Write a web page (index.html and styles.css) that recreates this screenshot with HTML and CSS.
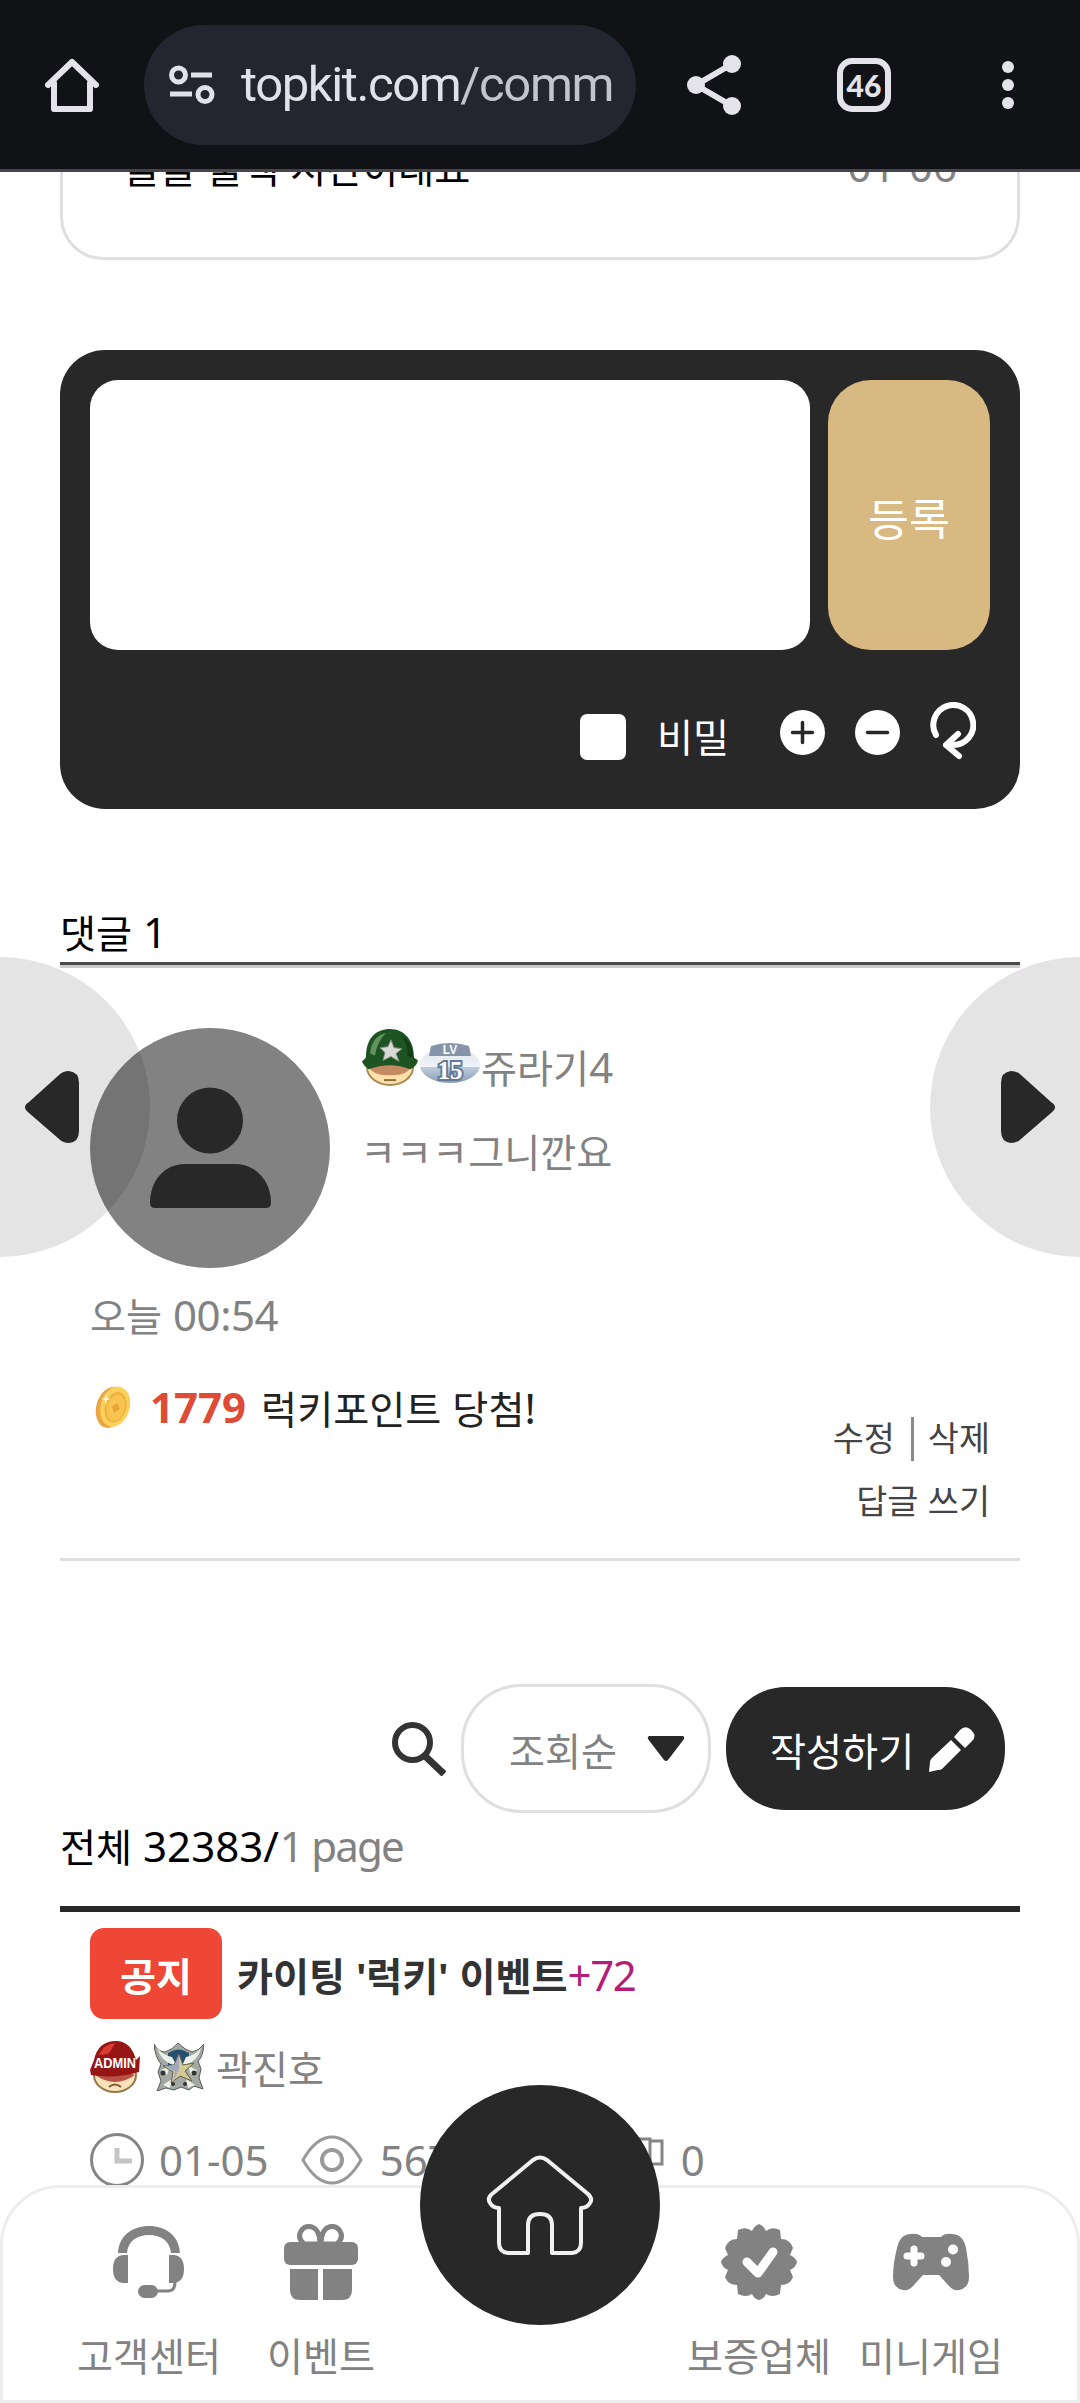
FILE: index.html
```html
<!DOCTYPE html>
<html lang="ko">
<head>
<meta charset="utf-8">
<meta name="viewport" content="width=device-width">
<title>topkit</title>
<link rel="stylesheet" href="styles.css">
</head>
<body>
<header class="browser">
  <svg class="browser-home" width="54" height="54" viewBox="0 0 54 54"><path d="M9 25v26h36V25M3 27 27 4l24 23" fill="none" stroke="#e3e3e9" stroke-width="6" stroke-linejoin="round" stroke-linecap="round"/></svg>
  <div class="url">
    <svg width="46" height="40" viewBox="0 0 46 40" fill="none" stroke="#e0e1e9" stroke-width="5"><circle cx="9.500" cy="10" r="7"/><path d="M22 10h21M1 29h22"/><circle cx="36" cy="29.500" r="7"/></svg>
    <span class="url-text">topkit.com<span class="url-path">/comm</span></span>
  </div>
  <svg class="share" width="54" height="60" viewBox="0 0 54 60" fill="#e3e3e9"><path d="M45 9 9 30l36 21" fill="none" stroke="#e3e3e9" stroke-width="6"/><circle cx="45" cy="9" r="9"/><circle cx="9" cy="30" r="9"/><circle cx="45" cy="51" r="9"/></svg>
  <div class="tabs">46</div>
  <svg class="more" width="12" height="48" viewBox="0 0 12 48" fill="#e3e3e9"><circle cx="6" cy="6" r="6"/><circle cx="6" cy="24" r="6"/><circle cx="6" cy="42" r="6"/></svg>
</header>

<main class="page">
  <section class="prev-card"><span>슬슬 출책 시간이래요</span><span class="num gray">01-06</span></section>

  <form class="editor">
    <div class="editor-main">
      <div class="field"></div>
      <div class="submit">등록</div>
    </div>
    <div class="editor-tools">
      <span class="check"></span>
      <span class="secret">비밀</span>
      <svg class="tool" width="45" height="45" viewBox="0 0 45 45"><circle cx="22.500" cy="22.500" r="22.500" fill="#fff"/><path d="M12.500 22.500h20M22.500 12.500v20" stroke="#282828" stroke-width="3.500" stroke-linecap="round"/></svg>
      <svg class="tool" width="45" height="45" viewBox="0 0 45 45"><circle cx="22.500" cy="22.500" r="22.500" fill="#fff"/><path d="M12.500 22.500h20" stroke="#282828" stroke-width="3.500" stroke-linecap="round"/></svg>
      <svg class="refresh" width="46" height="58" viewBox="0 0 46 58" fill="none" stroke="#fff" stroke-width="6" stroke-linecap="round" stroke-linejoin="round"><path d="M6 33A20 20 0 1 1 23 43L16 43M28 32 16 43 29 54"/></svg>
    </div>
  </form>

  <h2 class="count">댓글 <span class="num">1</span></h2>

  <article class="comment">
    <div class="comment-top">
      <svg class="avatar" width="240" height="240" viewBox="0 0 240 240"><circle cx="120" cy="120" r="120" fill="#828282"/><circle cx="120" cy="92.500" r="33" fill="#282828"/><path d="M60 175C60 152 75 136 95 136h50c20 0 36 16 36 39q0 5-5 5H65q-5 0-5-5Z" fill="#282828"/></svg>
      <div class="comment-body">
        <div class="author">
          <svg class="helmet" width="56" height="58" viewBox="0 0 56 58" preserveAspectRatio="none">
            <ellipse cx="28" cy="39" rx="23" ry="18" fill="#ffe0aa" stroke="#a98a50" stroke-width="2"/>
            <path d="M7 39q21-7 42 0-5 9-21 8-16 1-21-8Z" fill="#a55c3a" opacity=".65"/>
            <path d="M4 29C4 9 14 0 28 0s24 11 24 29l4 3q-2 7-8 9Q28 33 7 41q-5-3-7-8Z" fill="#1e5422"/>
            <path d="M8 25Q10 7 24 4 15 13 13 27Z" fill="#62915e"/><path d="M45 28Q47 14 38 6q12 5 13 23Z" fill="#153e18"/>
            <path d="m29 11 3 8 8 1-6 5 3 8-8-5-8 4 2-8-5-5 8-1Z" fill="#d9dad8" stroke="#858e85"/><path d="M22 52h12" stroke="#8c6e3d" stroke-width="2"/>
          </svg>
          <svg class="level" width="60" height="40" viewBox="0 0 60 40">
            <defs><linearGradient id="lv" x2="0" y2="1"><stop stop-color="#dfe6ee"/><stop offset=".55" stop-color="#eef3f8"/><stop offset=".56" stop-color="#bfccdd"/><stop offset="1" stop-color="#8a9cb4"/></linearGradient></defs>
            <ellipse cx="30" cy="22" rx="30" ry="18" fill="url(#lv)"/><path d="M11 3q19-6 38 0l2 10H9Z" fill="#8694a9"/>
            <text x="30" y="11" text-anchor="middle" class="lv-label">LV</text><text x="30" y="36" text-anchor="middle" class="lv-num">15</text>
          </svg>
          <span class="gray">쥬라기<span class="num">4</span></span>
        </div>
        <p class="message">ㅋㅋㅋ그니깐요</p>
      </div>
    </div>
    <div class="time gray">오늘 <span class="num">00:54</span></div>
    <div class="lucky">
      <svg width="38" height="46" viewBox="0 0 38 46"><g transform="rotate(16 19 23)"><ellipse cx="17" cy="24" rx="14.500" ry="21" fill="#eba544"/><ellipse cx="21" cy="22" rx="14.500" ry="20.500" fill="#fbd05b"/><ellipse cx="21.500" cy="22.500" rx="10.500" ry="15.500" fill="#f2ae3e"/><ellipse cx="22" cy="23" rx="9" ry="13.500" fill="#f9c350"/><path d="m22 18 4 5-4 5-4-5Z" fill="#e9a337"/></g><path d="m12 9 1 5 4 1-4 1-1 5-1-5-4-1 4-1Z" fill="#fff5cb"/></svg>
      <b class="num points">1779</b><span class="won">럭키포인트 당첨<span class="num">!</span></span>
    </div>
    <div class="actions">
      <div class="actions-row"><span>수정</span><i></i><span>삭제</span></div>
      <div>답글 쓰기</div>
    </div>
  </article>

  <div class="toolbar">
    <svg class="search" width="54" height="54" viewBox="0 0 54 54" fill="none" stroke="#333"><circle cx="20.500" cy="20.500" r="17.500" stroke-width="6"/><path d="m33 34 19 18" stroke-width="7"/></svg>
    <div class="select">조회순<svg width="38" height="27" viewBox="0 0 38 27"><path d="M2 1h34q2 1 1 3L21 25q-2 2-4 0L1 4q-1-2 1-3Z" fill="#282828"/></svg></div>
    <div class="write">작성하기<svg width="46" height="46" viewBox="0 0 46 46" fill="#fff"><path d="m22 14 10 10L13 43q-1 1-4 1l-9 2 1-10q0-2 2-4ZM25 11l6-7q5-5 10-1l2 2q5 5 0 10l-7 7Z"/></svg></div>
  </div>
  <div class="total">전체 <span class="num">32383/<span class="gray page-no">1 page</span></span></div>

  <article class="post">
    <div class="post-title"><span class="notice">공지</span><span class="title"><b>카이팅 <span class="num q">'</span>럭키<span class="num q">'</span> 이벤트</b></span><span class="num plus">+72</span></div>
    <div class="post-author">
      <svg width="50" height="52" viewBox="0 0 50 52"><ellipse cx="25" cy="34" rx="21" ry="17" fill="#fbe2b8" stroke="#96784a" stroke-width="2"/><path d="M5 34q20-8 40 0-20 14-40 0Z" fill="#b75245"/><path d="M4 19Q8 0 26 0q15 0 20 19l4-4-1 16q-24 7-48 3L0 29l4-10Z" fill="#961515"/><path d="M9 14Q14 3 25 2q-4 8-7 11Z" fill="#d93b36"/><text x="4" y="27" textLength="42" lengthAdjust="spacingAndGlyphs" class="admin">ADMIN</text><path d="M19 46q6-5 12 0" fill="none" stroke="#7c5c3a" stroke-width="2"/></svg>
      <svg class="emblem" width="50" height="48" viewBox="0 0 50 48"><path d="M0 1q4 8 11 8Q18 7 24 0q7 7 14 9 7-1 12-8-1 13-6 17l3 8-2 9 4 11-9-3-5 4-8-3-7 3-8-2-9 3 4-10-3-9 3-8Q1 14 0 1Z" fill="#a3a8a3" stroke="#555b59"/><path d="M14 10q11-7 21 0v13H14Z" fill="#264f70"/><path d="M3 5q7 8 15 9l5 9Q8 20 3 5ZM47 5q-7 8-15 9l-4 9Q43 20 47 5ZM7 27l9-4-3 9ZM43 27l-9-4 3 9ZM9 42l9-6-2 9ZM41 42l-9-6 2 9Z" fill="#edf0e9"/><path d="m25 11 4 11 11-2-9 8 7 10-12-5-9 7 2-11-10-6 11-1Z" fill="#d5ca91" stroke="#62604a"/><path d="m25 11 0 15-6 14 2-11-10-6 10-1Z" fill="#a1a8c1"/><circle cx="9" cy="30" r="2.500" fill="#333"/><circle cx="40" cy="30" r="2.500" fill="#333"/><circle cx="19" cy="41" r="2" fill="#333"/><circle cx="31" cy="41" r="2" fill="#333"/></svg>
      <span class="gray">곽진호</span>
    </div>
    <div class="post-meta num gray">
      <svg width="54" height="54" viewBox="0 0 54 54" fill="none" stroke="#858585"><circle cx="27" cy="27" r="25.500" stroke-width="3"/><path d="M27 15v13h15" stroke="#c4c4c4" stroke-width="5"/></svg>
      <span class="date">01-05</span>
      <svg class="eye" width="62" height="50" viewBox="0 0 62 50" fill="none" stroke="#999" stroke-width="3"><path d="M2 25Q15 2 31 2t29 23Q47 48 31 48T2 25Z"/><circle cx="31" cy="25" r="10" stroke-width="4"/></svg>
      <span class="views">567</span>
      <svg class="flag" width="54" height="54" viewBox="0 0 54 54" fill="none" stroke="#858585" stroke-width="3"><path d="M2 52V3h38v24H2M40 5h12v23H40Z"/></svg>
      <span>0</span>
    </div>
  </article>
</main>

<div class="pager pager-prev"><svg width="54" height="74" viewBox="0 0 54 72"><path d="M4 31 34 4Q38 0 44 0q10 1 10 12v48q0 11-10 12-6 0-10-4L4 42q-8-6 0-11Z" fill="#282828"/></svg></div>
<div class="pager pager-next"><svg width="54" height="74" viewBox="0 0 54 72"><path d="M50 31 20 4Q16 0 10 0 0 1 0 12v48q0 11 10 12 6 0 10-4l30-26q8-6 0-11Z" fill="#282828"/></svg></div>

<nav class="dock">
  <div class="dock-side">
    <div class="dock-item"><svg width="76" height="76" viewBox="0 0 76 76" fill="#828282"><path d="M7 29C8 11 22 2 38 2s30 9 31 27h-9C59 17 50 11 38 11S17 17 16 29Z"/><path d="M17 31v28h-5Q2 58 2 45T12 31ZM58 31v28h5q10-1 10-14T63 31Z"/><path d="M64 58q0 9-7 9H45" fill="none" stroke="#828282" stroke-width="3"/><rect x="27" y="61" width="20" height="13" rx="6.500"/></svg>고객센터</div>
    <div class="dock-item"><svg width="76" height="76" viewBox="0 0 76 76" fill="#828282"><rect x="1" y="18" width="74" height="23" rx="6"/><path d="M7 45h28v31H17Q7 76 7 66ZM40 45h29v21q0 10-10 10H40Z"/><path d="M37 20H21Q14 14 18 7q4-6 11-4 8 3 8 17ZM38 20h16q7-6 3-13-4-6-11-4-8 3-8 17Z" fill="none" stroke="#828282" stroke-width="5"/></svg>이벤트</div>
  </div>
  <div class="dock-side">
    <div class="dock-item"><svg width="76" height="76" viewBox="0 0 76 76"><path d="M38 0Q43 2 45 7q6-5 14-1l1 9q9 0 12 9l-3 7q6 3 7 7-1 5-7 8l3 7q-3 8-12 8l-1 9q-8 4-14 0-2 5-7 6-5-1-7-6-6 4-14 0l-1-9Q7 61 4 53l3-7Q1 43 0 38q1-4 7-7l-3-7q3-9 12-9l1-9q8-4 14 1 2-5 7-7Z" fill="#828282"/><path d="M26 38l11 11 15-21" fill="none" stroke="#fff" stroke-width="9" stroke-linecap="round" stroke-linejoin="round"/></svg>보증업체</div>
    <div class="dock-item"><svg width="76" height="76" viewBox="0 0 76 76"><path d="M18 10q7-1 11 3h19q4-4 11-3 11 0 14 14 3 15 3 29 0 11-10 13-6 1-10-4L46 51H30L20 62q-4 5-10 4Q0 64 0 53q0-14 4-29Q7 10 18 10Z" fill="#828282"/><path d="M21 25v14M14 32h14" stroke="#fff" stroke-width="7" stroke-linecap="round"/><circle cx="60" cy="25.500" r="5" fill="#fff"/><circle cx="53" cy="38" r="5" fill="#fff"/></svg>미니게임</div>
  </div>
</nav>
<div class="home-button"><svg width="108" height="100" viewBox="0 0 108 100" fill="none" stroke="#f1f1f1" stroke-width="4" stroke-linejoin="round"><path d="M47 5q7-5 14 0l41 34q5 5 2 9-3 5-9 5v35q0 9-9 10H66V70q0-11-12-11T42 70v28H22q-9-1-9-10V53q-6 0-9-5-3-5 2-9Z"/></svg></div>
</body>
</html>
```

FILE: styles.css
```css
* { box-sizing: border-box; }
body { margin: 0; width: 1080px; height: 2403px; overflow: hidden; position: relative; background: #fff; color: #000; font-family: "Noto Sans CJK KR", sans-serif; font-size: 39.200px; line-height: 60px; }
svg { display: block; flex: none; }
.num { font-family: "Noto Sans", sans-serif; font-size: 42px; }
.gray { color: #828282; }

/* browser bar */
.browser { position: relative; z-index: 5; height: 172px; padding: 25px 66px 24px 45px; background: #111216; border-bottom: 3px solid #46464a; display: flex; align-items: flex-start; }
.browser-home { margin: 33px 45px 0 0; }
.url { width: 492px; height: 120px; border-radius: 60px; background: #24262f; display: flex; align-items: center; padding-left: 25px; }
.url-text { margin-left: 26px; font-family: Roboto, sans-serif; font-size: 49px; letter-spacing: -1.400px; color: #e0e1e9; white-space: nowrap; }
.url-path { color: #c2c4cf; }
.share { margin: 30px 0 0 51px; }
.tabs { margin: 33px 0 0 96px; width: 54px; height: 54px; border: 6px solid #e3e3e9; border-radius: 15px; color: #e3e3e9; font: 900 30px/43px Lato, sans-serif; text-align: center; }
.more { margin: 36px 0 0 111px; }

.page { padding: 0 60px; }
.prev-card { height: 128px; margin-top: -40px; padding: 4px 60px 0 61px; border: 3px solid #dfdfdf; border-top: 0; border-radius: 0 0 43px 43px; display: flex; justify-content: space-between; }

/* comment editor */
.editor { margin-top: 90px; height: 459px; border-radius: 45px; background: #282828; padding: 30px; }
.editor-main { display: flex; gap: 18px; height: 270px; }
.field { width: 720px; background: #fff; border-radius: 28px; }
.submit { flex: 1; border-radius: 43px; background: #d7b981; color: #fff; font-size: 44.500px; line-height: 274px; text-align: center; }
.editor-tools { display: flex; justify-content: flex-end; align-items: flex-start; padding: 52px 15px 0 0; }
.check { width: 46px; height: 46px; border-radius: 7px; background: #fff; margin-top: 12px; }
.secret { color: #fff; margin: 3px 51px 0 31px; }
.tool { margin: 8px 30px 0 0; }
.refresh { margin-right: -1px; }

/* comments */
.count { margin: 92px 0 0; height: 64px; border-bottom: 3px solid #4b494c; box-shadow: 0 3px #cbc9cc; font-size: inherit; font-weight: 400; white-space: pre; }
.comment { height: 596px; padding: 63px 30px 0; border-bottom: 3px solid #dedede; }
.comment-top { display: flex; gap: 32px; }
.author { display: flex; height: 60px; }
.helmet { margin: 1px 2px 0 0; width: 56px; height: 57px; }
.level { margin: 15px 1px 0 0; }
.author span { line-height: 76px; }
.lv-label { font: bold 12px "Liberation Sans", sans-serif; fill: #f7fbff; }
.lv-num { font: bold 25px "Liberation Serif", serif; fill: #fff; stroke: #657a97; stroke-width: 4px; paint-order: stroke; }
.message { margin: 32px 0 0 -2px; color: #828282; }
.time { margin-top: 16px; }
.time .num { letter-spacing: -.500px; }
.lucky { display: flex; margin-top: 32px; color: #222; }
.lucky svg { margin: 7px 0 0 4px; }
.points { margin-left: 18px; color: #de4b37; }
.won { margin-left: 15px; }
.actions { color: #444; font-size: 33.800px; text-align: right; display: flex; flex-direction: column; line-height: 63px; margin-top: -33px; }
.actions-row { display: flex; justify-content: flex-end; }
.actions-row i { width: 3px; height: 44px; background: #8b8b8b; margin: 12px 14px 0 16px; }

/* list toolbar */
.toolbar { margin-top: 123px; height: 129px; display: flex; justify-content: flex-end; align-items: center; padding-right: 15px; }
.search { margin-right: 15px; }
.select { width: 250px; height: 129px; border: 3px solid #dfdfdf; border-radius: 60px; display: flex; align-items: center; padding-left: 45px; color: #828282; margin-right: 15px; }
.select svg { margin-left: 30px; }
.write { width: 279px; height: 123px; border-radius: 60px; background: #282828; color: #fff; display: flex; align-items: center; padding-left: 44px; }
.write svg { margin-left: 15px; }
.total { margin-top: 2px; white-space: pre; }
.page-no { letter-spacing: -1.800px; margin-left: 1px; }

/* post list */
.post { margin-top: 30px; border-top: 6px solid #282828; padding: 16px 30px 0; }
.post-title { display: flex; height: 91px; line-height: 93px; white-space: nowrap; }
.notice { width: 132px; border-radius: 14px; background: #ef4735; color: #fff; text-align: center; font-weight: 700; margin-right: 15px; }
.title { color: #333; }
.q { font-size: 38px; }
.plus { color: #b51c78; letter-spacing: -1.500px; }
.post-author { display: flex; margin-top: 18px; }
.post-author > svg { margin-top: 4px; height: 52px; }
.admin { font: bold 14px "Liberation Sans", sans-serif; fill: #fff; }
.emblem.emblem { margin: 6px 12px 0 14px; height: 48px; }
.post-meta { display: flex; margin-top: 33px; }
.post-meta > svg { margin-top: 3px; }
.date { margin: 0 32px 0 15px; }
.post-meta .eye { margin-top: 5px; }
.views { margin-left: 17px; width: 100px; }
.post-meta .flag { margin: 6px 17px 0 130px; }

/* side arrows */
.pager { position: absolute; top: 957px; width: 150px; height: 300px; background: rgba(0,0,0,.105); display: flex; align-items: center; padding: 0 25px; }
.pager-prev { left: 0; border-radius: 0 150px 150px 0; }
.pager-next { right: 0; border-radius: 150px 0 0 150px; justify-content: flex-end; }

/* bottom navigation */
.dock { position: absolute; left: 0; right: 0; bottom: 0; height: 218px; background: #fff; border: 3px solid #ededed; border-radius: 60px 60px 0 0; padding: 36px 60px 0; display: flex; justify-content: space-between; }
.dock-side { display: flex; }
.dock-item { width: 172px; display: flex; flex-direction: column; align-items: center; gap: 24px; color: #828282; }
.home-button { position: absolute; left: 420px; top: 2085px; width: 240px; height: 240px; border-radius: 50%; background: #282828; display: flex; align-items: center; justify-content: center; }
```
